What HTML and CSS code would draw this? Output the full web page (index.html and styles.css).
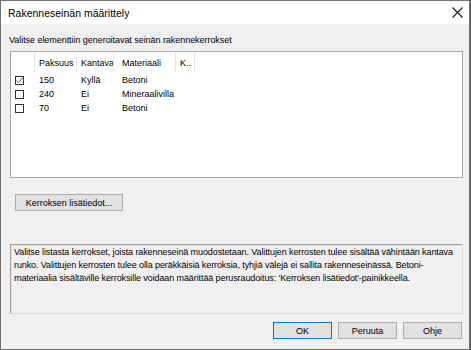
FILE: index.html
```html
<!DOCTYPE html>
<html lang="fi">
<head>
<meta charset="utf-8">
<title>Rakenneseinän määrittely</title>
<link rel="stylesheet" href="styles.css">
</head>
<body>
<div class="dialog">
  <div class="titlebar">
    <span class="title">Rakenneseinän määrittely</span>
    <svg class="close" width="11" height="11" viewBox="0 0 11 11"><path d="M0.5 0.5 L10.5 10.5 M10.5 0.5 L0.5 10.5" stroke="#1a1a1a" stroke-width="1.1" fill="none"/></svg>
  </div>
  <div class="body">
    <div class="label">Valitse elementtiin generoitavat seinän rakennekerrokset</div>
    <div class="list">
      <div class="row header">
        <div class="cell c0"></div>
        <div class="cell c1">Paksuus</div>
        <div class="cell c2">Kantava</div>
        <div class="cell c3">Materiaali</div>
        <div class="cell c4">K..</div>
      </div>
      <div class="row">
        <div class="cell c0"><span class="cb checked"><svg width="9" height="9" viewBox="0 0 9 9"><path d="M1.2 4.4 L3.4 6.7 L7.8 1.6" stroke="#555" stroke-width="1" fill="none"/></svg></span></div>
        <div class="cell c1">150</div>
        <div class="cell c2">Kyllä</div>
        <div class="cell c3">Betoni</div>
        <div class="cell c4"></div>
      </div>
      <div class="row">
        <div class="cell c0"><span class="cb"></span></div>
        <div class="cell c1">240</div>
        <div class="cell c2">Ei</div>
        <div class="cell c3">Mineraalivilla</div>
        <div class="cell c4"></div>
      </div>
      <div class="row">
        <div class="cell c0"><span class="cb"></span></div>
        <div class="cell c1">70</div>
        <div class="cell c2">Ei</div>
        <div class="cell c3">Betoni</div>
        <div class="cell c4"></div>
      </div>
    </div>
    <button class="btn details">Kerroksen lisätiedot...</button>
    <div class="info">Valitse listasta kerrokset, joista rakenneseinä muodostetaan. Valittujen kerrosten tulee sisältää vähintään kantava<br>runko. Valittujen kerrosten tulee olla peräkkäisiä kerroksia, tyhjiä välejä ei sallita rakenneseinässä. Betoni-<br>materiaalia sisältäville kerroksille voidaan määrittää perusraudoitus: 'Kerroksen lisätiedot'-painikkeella.</div>
    <div class="actions">
      <button class="btn default">OK</button>
      <button class="btn">Peruuta</button>
      <button class="btn">Ohje</button>
    </div>
  </div>
</div>
</body>
</html>
```

FILE: styles.css
```css
html, body {
  margin: 0;
  padding: 0;
}
body {
  background: #5a5a5a;
  width: 471px;
  height: 350px;
  overflow: hidden;
  font-family: "Liberation Sans", Arial, sans-serif;
  font-size: 9px;
  color: #000;
}
.dialog {
  width: 468px;
  height: 348px;
  border: 1px solid #707070;
  background: #f0f0f0;
  display: flex;
  flex-direction: column;
}
.titlebar {
  height: 23px;
  background: #fff;
  display: flex;
  align-items: center;
  justify-content: space-between;
  padding: 0 6px 0 7px;
}
.title {
  font-size: 10.5px;
  padding-top: 1px;
}
.close {
  display: block;
}
.body {
  padding: 9px 6px 0 9px;
  display: flex;
  flex-direction: column;
}
.label {
  line-height: 14px;
  margin-left: -1px;
  margin-bottom: 4px;
  letter-spacing: -0.05px;
}
.list {
  height: 125px;
  background: #fff;
  border: 1px solid #a5a5a5;
}
.row {
  display: flex;
  height: 14px;
  line-height: 14px;
}
.row.header {
  height: 19px;
  line-height: 20px;
  margin-top: 1px;
  margin-bottom: 1px;
}
.cell {
  box-sizing: border-box;
  padding-left: 4px;
  white-space: nowrap;
  overflow: hidden;
}
.header .cell {
  border-right: 1px solid #e5e5e5;
}
.c0 { width: 24px; padding-left: 4px; display: flex; align-items: center; }
.c1 { width: 42px; }
.c2 { width: 37px; }
.c3 { width: 62px; padding-left: 8px; }
.c4 { width: 19px; }
.cb {
  display: block;
  width: 9px;
  height: 9px;
  border: 1px solid #333;
  box-sizing: border-box;
  background: #fff;
  position: relative;
}
.cb svg {
  position: absolute;
  left: -1px;
  top: -1px;
}
.btn {
  font-family: "Liberation Sans", Arial, sans-serif;
  font-size: 9px;
  color: #000;
  background: #e1e1e1;
  border: 1px solid #adadad;
  margin: 0;
  padding: 0;
  box-sizing: border-box;
  height: 17px;
}
.details {
  align-self: flex-start;
  width: 108px;
  margin: 16px 0 0 5px;
}
.info {
  margin-top: 33px;
  height: 70px;
  box-sizing: border-box;
  border: 1px solid #a0a0a0;
  border-right-color: #dcdcdc;
  border-bottom-color: #dcdcdc;
  box-shadow: inset 1px 1px 0 #e3e3e3;
  padding: 1px 3px;
  line-height: 13px;
  letter-spacing: -0.1px;
  white-space: nowrap;
  overflow: hidden;
}
.actions {
  display: flex;
  justify-content: flex-end;
  gap: 6px;
  margin-top: 8px;
  padding-right: 1px;
}
.actions .btn {
  width: 59px;
}
.btn.default {
  border-color: #0078d7;
}
```
